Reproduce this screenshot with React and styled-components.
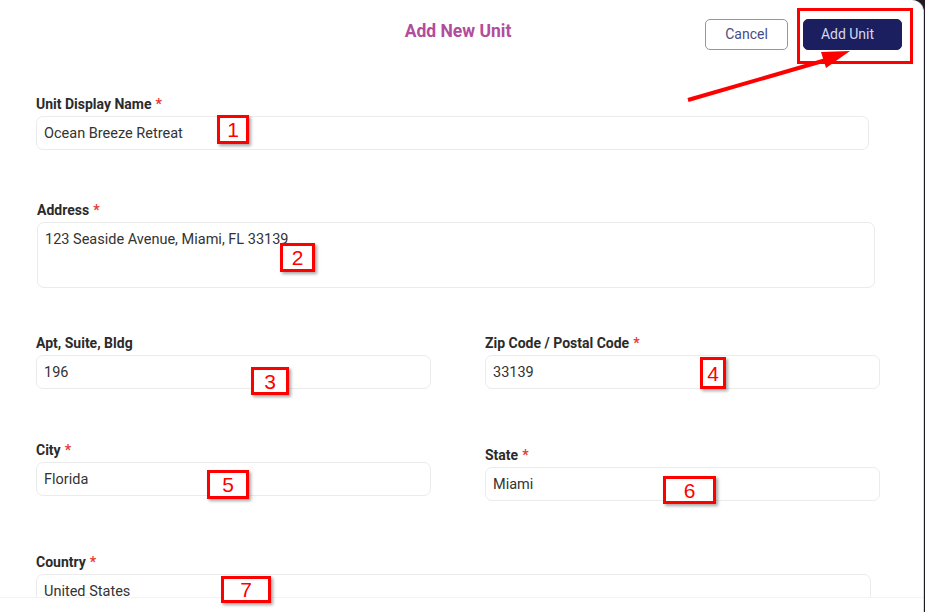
import React from "react";
import styled, { createGlobalStyle } from "styled-components";

const Global = createGlobalStyle`
  html, body { margin: 0; padding: 0; background: #1f1a24; }
  body { font-family: Roboto, "Liberation Sans", Arial, sans-serif; }
  * { box-sizing: border-box; }
`;

const Page = styled.div`
  position: relative;
  width: 925px;
  height: 612px;
  overflow: hidden;
  background: #1f1a24;
`;

const Modal = styled.div`
  width: 924px;
  height: 612px;
  background: #ffffff;
  border-top-right-radius: 12px;
  border-right: 1px solid #d9d9dd;
`;

const Scroll = styled.div`
  height: 598px;
  overflow: hidden;
  border-bottom: 1px solid #f3f3f3;
`;

const Header = styled.div`
  display: grid;
  grid-template-columns: 1fr auto 1fr;
  align-items: center;
  height: 62px;
  padding: 0 21px 0 14px;
`;

const Title = styled.h2`
  grid-column: 2;
  margin: 0;
  font-size: 17.5px;
  font-weight: 700;
  color: #b24c9b;
`;

const Actions = styled.div`
  grid-column: 3;
  justify-self: end;
  display: flex;
  gap: 15px;
  align-items: center;
  position: relative;
  top: 3px;
`;

const Button = styled.button`
  height: 31px;
  width: ${(p) => p.$w}px;
  border-radius: 5px;
  font-family: Roboto, "Liberation Sans", Arial, sans-serif;
  font-size: 14px;
  cursor: pointer;
  padding: 0 ${(p) => (p.$primary ? "10px" : "0")} 0 0;
  border: 1px solid ${(p) => (p.$primary ? "#1c1f5f" : "#8e92c4")};
  background: ${(p) => (p.$primary ? "#1c1f5f" : "#ffffff")};
  color: ${(p) => (p.$primary ? "#d6d8ee" : "#474c86")};
`;

const Form = styled.div`
  padding: 0 0 0 36px;
`;

const Row = styled.div`
  display: grid;
  grid-template-columns: 395px 395px;
  column-gap: 54px;
  align-items: start;
  margin-top: ${(p) => p.$mt}px;
`;

const Field = styled.div`
  margin-top: ${(p) => p.$mt || 0}px;
  width: ${(p) => (p.$w ? `${p.$w}px` : "auto")};
  margin-left: ${(p) => p.$ml || 0}px;
`;

const Label = styled.div`
  font-size: 14px;
  font-weight: 700;
  color: #2b2b2b;
  line-height: 16px;
  height: 17px;
  padding-top: 1px;
  margin-bottom: 4px;
`;

const Star = styled.span`
  color: #e53935;
  margin-left: 4px;
`;

const Input = styled.div`
  height: ${(p) => p.$h || 34}px;
  border: 1px solid #ebebeb;
  border-radius: 7px;
  padding: ${(p) => (p.$multi ? "8px 7px" : "0 7px")};
  display: flex;
  align-items: ${(p) => (p.$multi ? "flex-start" : "center")};
  font-size: 14.5px;
  color: #333333;
  background: #fff;
`;

const NumBox = styled.div`
  position: absolute;
  left: ${(p) => p.$x}px;
  top: ${(p) => p.$y}px;
  width: ${(p) => p.$w}px;
  height: ${(p) => p.$h}px;
  border: 3px solid #ff0000;
  background: #ffffff;
  box-shadow: 2px 2px 3px rgba(0, 0, 0, 0.35);
  color: #ff0000;
  font-family: "Liberation Sans", Arial, sans-serif;
  font-size: 21px;
  line-height: 1;
  display: flex;
  align-items: center;
  justify-content: center;
`;

const Highlight = styled.div`
  position: absolute;
  left: 797px;
  top: 8px;
  width: 116px;
  height: 56px;
  border: 3px solid #ff0000;
`;

const ArrowSvg = styled.svg`
  position: absolute;
  left: 0;
  top: 0;
  pointer-events: none;
`;

const boxes = [
  { n: "1", x: 217, y: 115, w: 32, h: 29 },
  { n: "2", x: 280, y: 243, w: 35, h: 29 },
  { n: "3", x: 251, y: 367, w: 38, h: 28 },
  { n: "4", x: 700, y: 357, w: 26, h: 32 },
  { n: "5", x: 207, y: 470, w: 42, h: 29 },
  { n: "6", x: 663, y: 476, w: 53, h: 28 },
  { n: "7", x: 221, y: 576, w: 50, h: 27 },
];

export default function App() {
  return (
    <>
      <Global />
      <Page>
        <Modal>
          <Scroll>
            <Header>
              <Title>Add New Unit</Title>
              <Actions>
                <Button $w={83}>Cancel</Button>
                <Button $w={99} $primary>
                  Add Unit
                </Button>
              </Actions>
            </Header>
            <Form>
              <Field $mt={33} $w={833}>
                <Label>
                  Unit Display Name<Star>*</Star>
                </Label>
                <Input>Ocean Breeze Retreat</Input>
              </Field>
              <Field $mt={51} $w={838} $ml={1}>
                <Label>
                  Address<Star>*</Star>
                </Label>
                <Input $h={66} $multi>
                  123 Seaside Avenue, Miami, FL 33139
                </Input>
              </Field>
              <Row $mt={46}>
                <Field>
                  <Label>Apt, Suite, Bldg</Label>
                  <Input>196</Input>
                </Field>
                <Field>
                  <Label>
                    Zip Code / Postal Code<Star>*</Star>
                  </Label>
                  <Input>33139</Input>
                </Field>
              </Row>
              <Row $mt={52}>
                <Field>
                  <Label>
                    City<Star>*</Star>
                  </Label>
                  <Input>Florida</Input>
                </Field>
                <Field $mt={5}>
                  <Label>
                    State<Star>*</Star>
                  </Label>
                  <Input>Miami</Input>
                </Field>
              </Row>
              <Field $mt={52} $w={835}>
                <Label>
                  Country<Star>*</Star>
                </Label>
                <Input>United States</Input>
              </Field>
            </Form>
          </Scroll>
        </Modal>

        <Highlight />
        <ArrowSvg width="925" height="612" viewBox="0 0 925 612">
          <line x1="688" y1="100" x2="826" y2="60" stroke="#ff0000" strokeWidth="4" />
          <polygon points="850,51 821,52 826,68" fill="#ff0000" />
        </ArrowSvg>
        {boxes.map((b) => (
          <NumBox key={b.n} $x={b.x} $y={b.y} $w={b.w} $h={b.h}>
            {b.n}
          </NumBox>
        ))}
      </Page>
    </>
  );
}
